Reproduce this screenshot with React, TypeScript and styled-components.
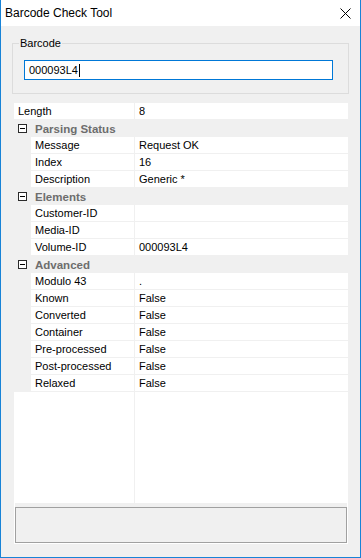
import React from "react";
import styled, { createGlobalStyle } from "styled-components";

const Global = createGlobalStyle`
  html, body { margin: 0; padding: 0; background: #fff; }
  *, *::before, *::after { box-sizing: border-box; }
`;

const Window = styled.div`
  width: 361px;
  height: 558px;
  display: flex;
  flex-direction: column;
  border: 1px solid #1883d7;
  border-top: none;
  background: #f0f0f0;
  font-family: "Liberation Sans", Arial, sans-serif;
  color: #000;
`;

const TitleBar = styled.header`
  flex: none;
  height: 26px;
  background: #fff;
  display: flex;
  align-items: center;
  justify-content: space-between;
  padding-left: 4px;
`;

const Title = styled.h1`
  margin: 0;
  font-size: 12px;
  font-weight: normal;
  line-height: 26px;
`;

const CloseButton = styled.button`
  width: 29px;
  height: 26px;
  padding: 0;
  border: 0;
  background: transparent;
  display: flex;
  align-items: center;
  justify-content: center;
`;

const Client = styled.main`
  flex: 1;
  display: flex;
  flex-direction: column;
  padding: 11px 11px 13px 11px;
`;

const GroupBox = styled.fieldset`
  margin: 0;
  padding: 0;
  min-width: 0;
  border: 1px solid #dcdcdc;
`;

const Legend = styled.legend`
  margin-left: 6px;
  padding: 0 1px;
  font-size: 11px;
  line-height: 13px;
`;

const GroupContent = styled.div`
  padding: 10px 15px 13px 11px;
`;

const TextBox = styled.div`
  height: 20px;
  border: 1px solid #0078d7;
  background: #fff;
  padding-left: 4px;
  display: flex;
  align-items: center;
  font-size: 11px;
`;

const Caret = styled.span`
  display: inline-block;
  width: 1px;
  height: 13px;
  margin-left: 1px;
  background: #000;
`;

const PropertyGrid = styled.section`
  margin: 9px 1px 0 2px;
  height: 441px;
  background: #fff;
  display: flex;
  flex-direction: column;
  font-size: 11px;
`;

const GridBody = styled.div`
  flex: 1;
  display: flex;
  flex-direction: column;
`;

const Row = styled.div`
  flex: none;
  display: grid;
  grid-template-columns: 120px 1fr;
  height: 17px;
  border-bottom: 1px solid #f0f0f0;
  line-height: 16px;
`;

const LabelCell = styled.div<{ $nested: boolean }>`
  border-left: ${(p) => (p.$nested ? "17px solid #f0f0f0" : "0")};
  padding-left: 4px;
  white-space: nowrap;
  overflow: hidden;
`;

const ValueCell = styled.div`
  border-left: 1px solid #f0f0f0;
  padding-left: 4px;
  white-space: nowrap;
  overflow: hidden;
`;

const CategoryRow = styled.div`
  flex: none;
  height: 17px;
  background: #f0f0f0;
  display: flex;
  align-items: center;
  padding-left: 4px;
  gap: 8px;
`;

const Collapse = styled.span`
  width: 9px;
  height: 9px;
  border: 1px solid #2b2b2b;
  background: #fff;
  display: flex;
  align-items: center;
  justify-content: center;
  &::after {
    content: "";
    width: 5px;
    height: 1px;
    background: #000;
  }
`;

const CategoryName = styled.span`
  font-weight: bold;
  font-size: 11.5px;
  color: #6d6d6d;
  line-height: 16px;
`;

const Filler = styled.div`
  flex: 1;
  display: grid;
  grid-template-columns: 120px 1fr;
`;

const FillerValue = styled.div`
  border-left: 1px solid #f0f0f0;
`;

const HelpWrap = styled.div`
  flex: none;
  margin: 0 1px 1px;
  padding-top: 4px;
  background: #f0f0f0;
`;

const HelpBox = styled.div`
  height: 36px;
  border: 1px solid #a0a0a0;
  background: #f0f0f0;
`;

type Item =
  | { kind: "cat"; label: string }
  | { kind: "prop"; label: string; value: string; nested: boolean };

const items: Item[] = [
  { kind: "prop", label: "Length", value: "8", nested: false },
  { kind: "cat", label: "Parsing Status" },
  { kind: "prop", label: "Message", value: "Request OK", nested: true },
  { kind: "prop", label: "Index", value: "16", nested: true },
  { kind: "prop", label: "Description", value: "Generic *", nested: true },
  { kind: "cat", label: "Elements" },
  { kind: "prop", label: "Customer-ID", value: "", nested: true },
  { kind: "prop", label: "Media-ID", value: "", nested: true },
  { kind: "prop", label: "Volume-ID", value: "000093L4", nested: true },
  { kind: "cat", label: "Advanced" },
  { kind: "prop", label: "Modulo 43", value: ".", nested: true },
  { kind: "prop", label: "Known", value: "False", nested: true },
  { kind: "prop", label: "Converted", value: "False", nested: true },
  { kind: "prop", label: "Container", value: "False", nested: true },
  { kind: "prop", label: "Pre-processed", value: "False", nested: true },
  { kind: "prop", label: "Post-processed", value: "False", nested: true },
  { kind: "prop", label: "Relaxed", value: "False", nested: true },
];

export default function App() {
  return (
    <>
      <Global />
      <Window>
        <TitleBar>
          <Title>Barcode Check Tool</Title>
          <CloseButton aria-label="Close">
            <svg width="11" height="11" viewBox="0 0 11 11">
              <path d="M0.5 0.5 L10.5 10.5 M10.5 0.5 L0.5 10.5" stroke="#000" strokeWidth="1" fill="none" />
            </svg>
          </CloseButton>
        </TitleBar>
        <Client>
          <GroupBox>
            <Legend>Barcode</Legend>
            <GroupContent>
              <TextBox role="textbox">
                000093L4
                <Caret />
              </TextBox>
            </GroupContent>
          </GroupBox>
          <PropertyGrid>
            <GridBody>
              {items.map((it, i) =>
                it.kind === "cat" ? (
                  <CategoryRow key={i}>
                    <Collapse />
                    <CategoryName>{it.label}</CategoryName>
                  </CategoryRow>
                ) : (
                  <Row key={i}>
                    <LabelCell $nested={it.nested}>{it.label}</LabelCell>
                    <ValueCell>{it.value}</ValueCell>
                  </Row>
                )
              )}
              <Filler>
                <div />
                <FillerValue />
              </Filler>
            </GridBody>
            <HelpWrap>
              <HelpBox />
            </HelpWrap>
          </PropertyGrid>
        </Client>
      </Window>
    </>
  );
}
